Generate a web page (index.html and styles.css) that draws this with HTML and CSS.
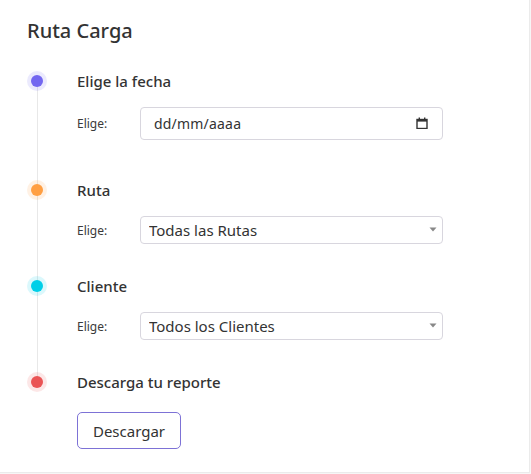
FILE: index.html
```html
<!DOCTYPE html>
<html lang="es">
<head>
<meta charset="utf-8">
<title>Ruta Carga</title>
<link rel="stylesheet" href="styles.css">
</head>
<body>
<div class="card">
  <h1 class="card-title">Ruta Carga</h1>
  <div class="timeline">
    <div class="step step-date">
      <div class="marker"><span class="dot dot-primary"></span></div>
      <div class="content">
        <div class="step-title">Elige la fecha</div>
        <div class="field">
          <label class="label">Elige:</label>
          <div class="control control-date">
            <input class="input" type="text" placeholder="dd/mm/aaaa">
            <svg class="cal-icon" width="12" height="12" viewBox="0 0 12 12"><rect x="1" y="2.5" width="10" height="9" fill="none" stroke="#333" stroke-width="1.4"/><rect x="1" y="2" width="10" height="2.6" fill="#333"/><rect x="2.6" y="0.5" width="1.4" height="2" fill="#333"/><rect x="8" y="0.5" width="1.4" height="2" fill="#333"/></svg>
          </div>
        </div>
      </div>
    </div>
    <div class="step">
      <div class="marker"><span class="dot dot-warning"></span></div>
      <div class="content">
        <div class="step-title">Ruta</div>
        <div class="field">
          <label class="label">Elige:</label>
          <div class="control">
            <select class="select"><option>Todas las Rutas</option></select>
            <svg class="arrow" width="8" height="5" viewBox="0 0 8 5"><path d="M0.5 0.5 L7.5 0.5 L4 4.5 Z" fill="#888"/></svg>
          </div>
        </div>
      </div>
    </div>
    <div class="step">
      <div class="marker"><span class="dot dot-info"></span></div>
      <div class="content">
        <div class="step-title">Cliente</div>
        <div class="field">
          <label class="label">Elige:</label>
          <div class="control">
            <select class="select"><option>Todos los Clientes</option></select>
            <svg class="arrow" width="8" height="5" viewBox="0 0 8 5"><path d="M0.5 0.5 L7.5 0.5 L4 4.5 Z" fill="#888"/></svg>
          </div>
        </div>
      </div>
    </div>
    <div class="step">
      <div class="marker"><span class="dot dot-danger"></span></div>
      <div class="content">
        <div class="step-title">Descarga tu reporte</div>
        <button class="btn" type="button">Descargar</button>
      </div>
    </div>
  </div>
</div>
</body>
</html>
```
FILE: styles.css
```css
* { box-sizing: border-box; }
html, body { margin: 0; padding: 0; }
body {
  background: #f6f6f6;
  font-family: "Noto Sans", "Open Sans", sans-serif;
  color: #3a3a3a;
}
.card {
  width: 530px;
  height: 473px;
  background: #fff;
  border-right: 1px solid #ebebeb;
  border-bottom: 1px solid #ebebeb;
  padding: 17px 0 0 27px;
}
.card-title {
  margin: 0 0 25px;
  font-size: 20px;
  line-height: 28px;
  font-weight: 500;
  color: #333;
}
.timeline { display: flex; flex-direction: column; }
.step {
  display: grid;
  grid-template-columns: 20px 1fr;
  column-gap: 30px;
}
.content { padding-bottom: 31px; }
.step-date .content { padding-bottom: 39px; }
.step:last-child .content { padding-bottom: 0; }
.marker {
  display: flex;
  justify-content: center;
  align-items: flex-start;
  background: linear-gradient(#e8e8e8, #e8e8e8) center top / 1px 100% no-repeat;
}
.step:first-child .marker {
  background-position: center bottom;
  background-size: 1px calc(100% - 11px);
}
.step:last-child .marker {
  background-size: 1px 11px;
}
.dot {
  width: 12px;
  height: 12px;
  border-radius: 50%;
  margin-top: 5px;
}
.dot-primary { background: #7367f0; box-shadow: 0 0 0 4px rgba(115, 103, 240, 0.14); }
.dot-warning { background: #ff9f43; box-shadow: 0 0 0 4px rgba(255, 159, 67, 0.14); }
.dot-info { background: #00cfe8; box-shadow: 0 0 0 4px rgba(0, 207, 232, 0.14); }
.dot-danger { background: #ea5455; box-shadow: 0 0 0 4px rgba(234, 84, 85, 0.14); }
.step-title {
  font-size: 15px;
  line-height: 22px;
  font-weight: 500;
  color: #333;
}
.field {
  display: flex;
  align-items: center;
  margin-top: 15px;
}
.label {
  width: 63px;
  font-size: 12px;
  color: #3a3a3a;
}
.control {
  position: relative;
  width: 303px;
}
.input, .select {
  display: block;
  width: 100%;
  font-family: inherit;
  border: 1px solid #d8d6de;
  border-radius: 4px;
  background: #fff;
  color: #333;
  outline: none;
}
.input {
  height: 33px;
  padding: 0 0 0 13px;
  font-size: 14px;
  letter-spacing: 0.2px;
}
.input::placeholder { color: #333; opacity: 1; }
.select {
  height: 28px;
  padding: 0 0 0 8px;
  font-size: 15px;
  appearance: none;
  -webkit-appearance: none;
}
.cal-icon {
  position: absolute;
  right: 15px;
  top: 10px;
}
.arrow {
  position: absolute;
  right: 6px;
  top: 11px;
}
.btn {
  margin-top: 19px;
  width: 104px;
  height: 37px;
  border: 1px solid #7d72d6;
  border-radius: 5px;
  background: #fff;
  font-family: inherit;
  font-size: 15px;
  color: #333;
  padding: 0;
}
```
